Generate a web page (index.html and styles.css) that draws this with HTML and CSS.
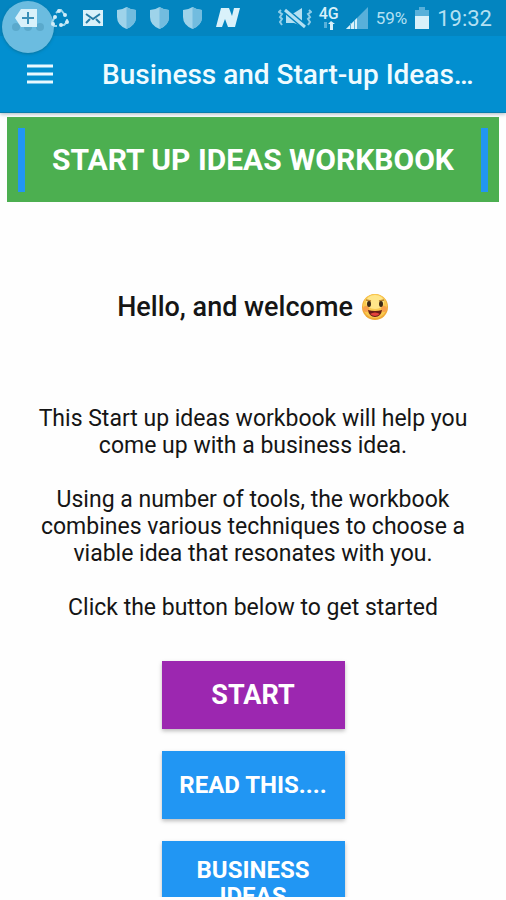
FILE: index.html
```html
<!DOCTYPE html>
<html lang="en">
<head>
<meta charset="utf-8">
<meta name="viewport" content="width=device-width, initial-scale=1">
<title>Business and Start-up Ideas</title>
<link rel="stylesheet" href="styles.css">
</head>
<body>
<div class="screen">
  <header class="top">
    <div class="status">
      <div class="assist"><i></i><i></i><i></i></div>
      <div class="notifications">
        <svg width="24" height="22" viewBox="0 0 24 22"><path fill="#d9f1fa" d="M7 2h16v18H7L1 11z"/><path d="M14 5v12M8 11h12" stroke="#3a90b8" stroke-width="2"/></svg>
        <svg width="20" height="22" viewBox="0 0 20 22"><path d="M6 6l3-3h2l4 5M17 12v3l-3 3h-3M7 19H4l-2-4 3-5" fill="none" stroke="#9dd6ec" stroke-width="2"/><g fill="#d0edf8"><circle cx="9" cy="4" r="2"/><circle cx="15" cy="8" r="2"/><circle cx="17" cy="15" r="2"/><circle cx="11" cy="18" r="2"/><circle cx="3" cy="17" r="2"/><circle cx="5" cy="10" r="2"/></g></svg>
        <svg width="22" height="22" viewBox="0 0 22 22"><path fill="#d9f1fa" d="M1 3h20v16H1z"/><path d="M4 7l7 5 7-5M4 16l4-4M18 16l-4-4" fill="none" stroke="#247ba5" stroke-width="2"/></svg>
        <svg width="21" height="24" viewBox="0 0 21 24"><path fill="#9ed3ea" d="M10.500 1Q15 4 20 4v7q0 8-9.500 12Q1 19 1 11V4q5 0 9.500-3z"/><path fill="#72bcdf" d="M10.500 1Q15 4 20 4v7q0 8-9.500 12z"/></svg>
        <svg width="21" height="24" viewBox="0 0 21 24"><path fill="#9ed3ea" d="M10.500 1Q15 4 20 4v7q0 8-9.500 12Q1 19 1 11V4q5 0 9.500-3z"/><path fill="#72bcdf" d="M10.500 1Q15 4 20 4v7q0 8-9.500 12z"/></svg>
        <svg width="21" height="24" viewBox="0 0 21 24"><path fill="#9ed3ea" d="M10.500 1Q15 4 20 4v7q0 8-9.500 12Q1 19 1 11V4q5 0 9.500-3z"/><path fill="#72bcdf" d="M10.500 1Q15 4 20 4v7q0 8-9.500 12z"/></svg>
        <svg width="26" height="22" viewBox="0 0 26 22"><path fill="#d9f1fa" d="M6 1h8l3 8 2-8h6l-5 19h-7l-3-8-3 8H1z"/></svg>
      </div>
      <div class="system">
        <svg width="34" height="22" viewBox="0 0 34 22"><g fill="none" stroke="#8fcde8" stroke-width="2"><path d="M3 3l-2 2 3 2-2 3 2 2-2 3 2 3M31 3l2 2-3 2 2 3-2 2 2 3-2 3"/></g><path fill="#b4e0f2" d="M8 6h8l8-5v18l-8-3H8z"/><path d="M7 3l20 17" stroke="#0385c0" stroke-width="6"/><path d="M7 3l20 17" stroke="#b4e0f2" stroke-width="3"/></svg>
        <div class="network"><span>4G</span><svg width="12" height="9" viewBox="0 0 12 9"><path fill="#58b0da" d="M1 1h3v6H1z"/><path fill="#d9f1fa" d="M8 0l4 3h-2v6H7V3H5z"/></svg></div>
        <svg width="23" height="24" viewBox="0 0 23 24"><path fill="#58b0da" d="M22 1v22H0z"/><path fill="#d9f1fa" d="M11 12v11H0z"/><path stroke="#58b0da" d="M4.500 17v6M8.500 14v9"/></svg>
        <span class="percent">59%</span>
        <svg width="16" height="24" viewBox="0 0 16 24"><path fill="#58b0da" d="M5 1h6v3h4v7H1V4h4z"/><path fill="#d9f1fa" d="M1 10h14v13H1z"/></svg>
        <time class="clock">19:32</time>
      </div>
    </div>
    <div class="toolbar">
      <button class="menu" aria-label="Menu"><svg width="28" height="20" viewBox="0 0 28 20"><path d="M1 2h26M1 10h26M1 18h26" stroke="#e9f9ff" stroke-width="3"/></svg></button>
      <h1 class="title">Business and Start-up Ideas…</h1>
    </div>
  </header>
  <main class="content">
    <h2 class="banner">START UP IDEAS WORKBOOK</h2>
    <h3 class="welcome">Hello, and welcome
      <svg width="28" height="28" viewBox="0 0 28 28" role="img" aria-label="Smiling face"><circle cx="14" cy="14" r="13" fill="#efa936"/><circle cx="14" cy="13" r="12" fill="#f9c94f"/><ellipse cx="14" cy="9" rx="9" ry="7" fill="#ffe68a"/><circle cx="5" cy="16" r="3" fill="#f8a04b"/><circle cx="23" cy="16" r="3" fill="#f8a04b"/><path d="M5 7l5 1M18 8l5-1" stroke="#ba8530" stroke-width="1.500"/><ellipse cx="8" cy="11" rx="2" ry="3" fill="#3c2815"/><ellipse cx="20" cy="11" rx="2" ry="3" fill="#3c2815"/><path fill="#681c16" d="M7 17q7 2 14 0-1 7-7 7t-7-7z"/><path fill="#e5423c" d="M9 21q5-3 10 0-5 4-10 0z"/></svg>
    </h3>
    <div class="intro">
      <p>This Start up ideas workbook will help you<br>come up with a business idea.</p>
      <p>Using a number of tools, the workbook<br>combines various techniques to choose a<br>viable idea that resonates with you.</p>
      <p>Click the button below to get started</p>
    </div>
    <div class="actions">
      <button class="action start">START</button>
      <button class="action">READ THIS....</button>
      <button class="action">BUSINESS IDEAS</button>
    </div>
  </main>
</div>
</body>
</html>
```
FILE: styles.css
```css
* { box-sizing: border-box; }
body {
  margin: 0;
  background: #fefefe;
  color: #151515;
  font-family: Roboto, "Liberation Sans", sans-serif;
}
h1, h2, h3, p { margin: 0; }
svg { display: block; flex: none; }
button { border: 0; font-family: inherit; }
.screen {
  display: flex;
  flex-direction: column;
  height: 100vh;
  padding-bottom: 3px;
}
.top {
  position: relative;
  z-index: 1;
  flex: none;
  background: #028fd0;
  border-bottom: 1px solid #087cae;
  box-shadow: 0 1px 4px #a7b6be;
}
.status {
  position: relative;
  display: flex;
  align-items: center;
  justify-content: space-between;
  height: 36px;
  padding: 0 14px;
  background: #0385c0;
  color: #b4e0f2;
}
.notifications { position: relative; display: flex; align-items: center; gap: 12px; }
.system { display: flex; align-items: center; gap: 7px; }
.network {
  display: flex;
  flex-direction: column;
  align-items: center;
  color: #d9f1fa;
  font-size: 16px;
  font-weight: 500;
  line-height: 14px;
}
.percent { font-size: 17px; }
.clock { font-size: 22px; }
.assist {
  position: absolute;
  top: 1px;
  left: 2px;
  display: flex;
  align-items: center;
  justify-content: center;
  gap: 4px;
  width: 52px;
  height: 52px;
  border-radius: 50%;
  background: #6bbce0;
  box-shadow: 0 1px 3px #08759f;
}
.assist i {
  width: 8px;
  height: 8px;
  border-radius: 50%;
  background: #5aa9cc;
}
.toolbar {
  display: flex;
  align-items: center;
  height: 76px;
  padding: 0 26px;
}
.menu { padding: 0; background: none; }
.title {
  flex: 1;
  padding-left: 48px;
  overflow: hidden;
  color: #effbff;
  font-size: 28px;
  font-weight: 500;
  white-space: nowrap;
}
.content {
  flex: 1;
  min-height: 0;
  overflow: hidden;
  padding: 4px 7px 0;
  text-align: center;
}
.banner {
  display: flex;
  align-items: center;
  justify-content: space-between;
  height: 85px;
  padding: 0 11px;
  background: #4caf50;
  color: #fff;
  font-size: 30px;
  font-weight: 700;
}
.banner::before, .banner::after {
  content: "";
  width: 7px;
  height: 64px;
  background: #2196f3;
}
.welcome {
  display: flex;
  align-items: center;
  justify-content: center;
  gap: 8px;
  margin-top: 90px;
  font-size: 27px;
  font-weight: 500;
  line-height: 30px;
}
.intro {
  display: grid;
  gap: 27px;
  margin-top: 83px;
  font-size: 23px;
  line-height: 27px;
}
.actions {
  display: grid;
  justify-content: center;
  grid-template-columns: 183px;
  gap: 22px;
  margin-top: 40px;
}
.action {
  min-height: 68px;
  padding: 16px;
  background: #2196f3;
  box-shadow: 0 2px 4px #bbb;
  color: #fff;
  font-size: 24px;
  font-weight: 700;
  line-height: 26px;
}
.start {
  background: #9c27b0;
  font-size: 27px;
}
```
